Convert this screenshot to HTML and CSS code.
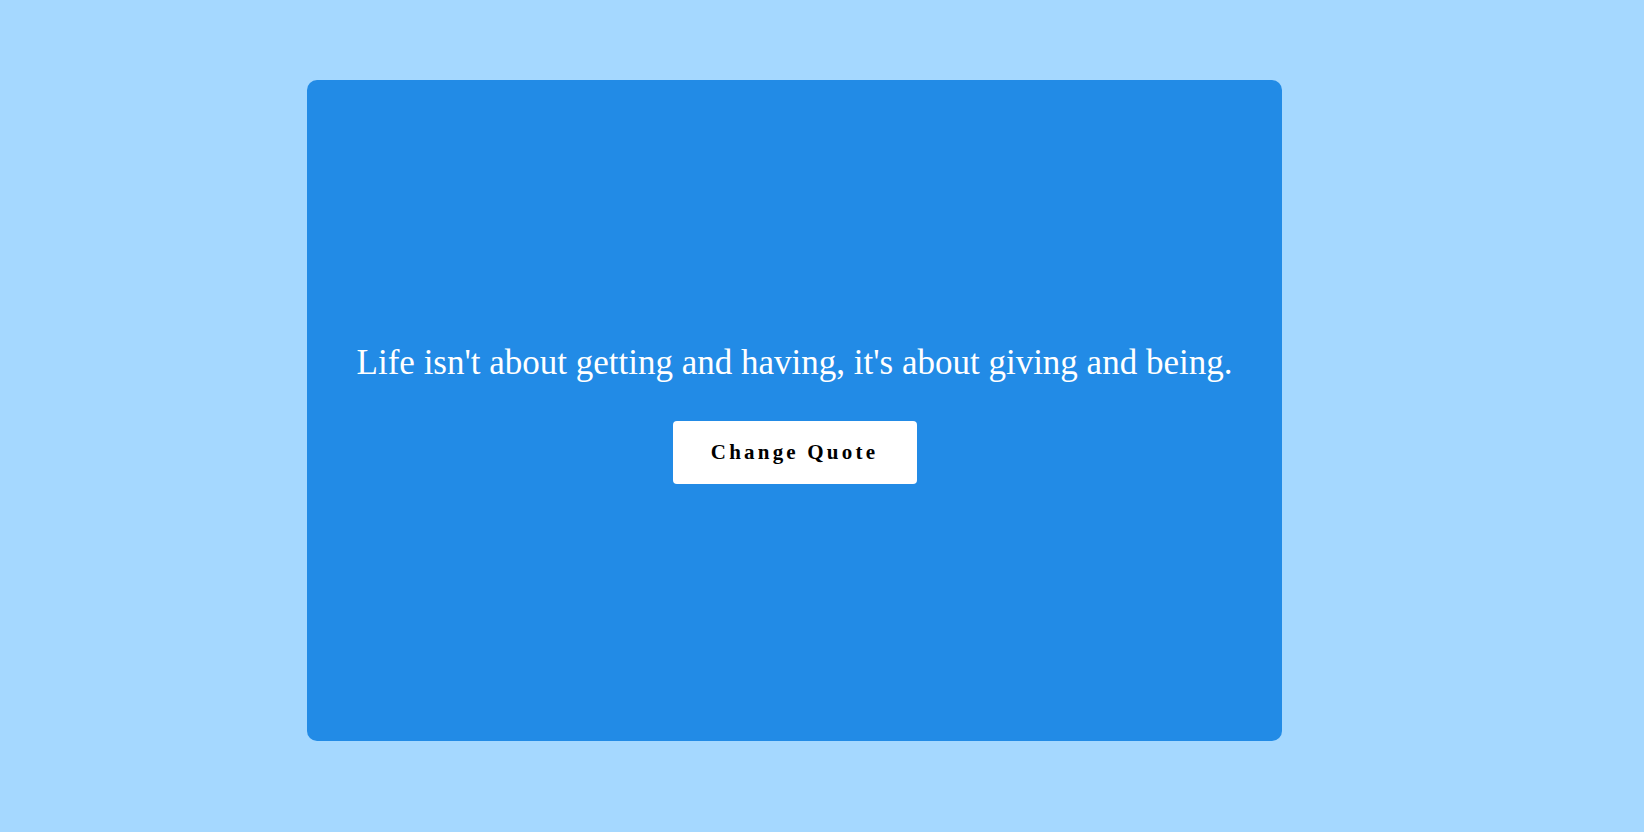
FILE: index.html
```html
<!DOCTYPE html>
<html>
<head>
<meta charset="utf-8">
<link rel="stylesheet" href="styles.css">
</head>
<body>
<div class="page">
  <div class="card">
    <p class="quote">Life isn't about getting and having, it's about giving and being.</p>
    <button class="btn">Change Quote</button>
  </div>
</div>
</body>
</html>
```
FILE: styles.css
```css
html, body {
  margin: 0;
  padding: 0;
  background: #a5d8ff;
  font-family: "Liberation Serif", "Times New Roman", serif;
}
.page {
  height: 832px;
  box-sizing: border-box;
  padding: 80px 0 0 307px;
}
.card {
  width: 975px;
  height: 661px;
  box-sizing: border-box;
  padding-top: 6px;
  background: #228be6;
  border-radius: 10px;
  display: flex;
  flex-direction: column;
  align-items: center;
  justify-content: center;
}
.quote {
  margin: 0 0 38px;
  color: #fff;
  font-size: 35px;
  line-height: 40px;
  text-align: center;
}
.btn {
  width: 244px;
  height: 63px;
  background: #fff;
  border: none;
  border-radius: 4px;
  font-family: "Liberation Serif", "Times New Roman", serif;
  font-weight: bold;
  font-size: 21px;
  letter-spacing: 3.2px;
  color: #000;
}
```
